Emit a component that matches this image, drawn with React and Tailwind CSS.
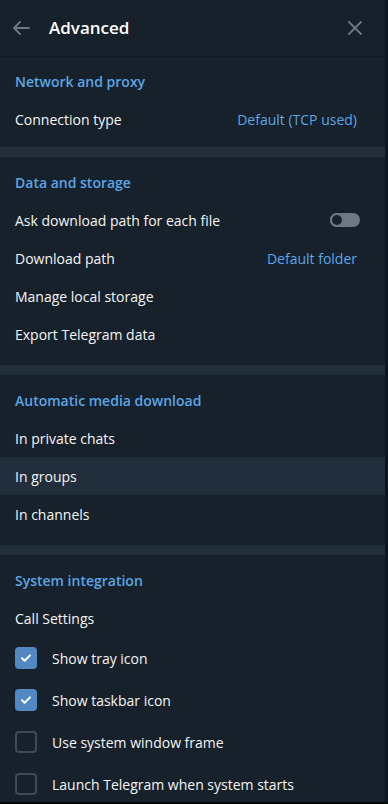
import { useState } from 'react'

function Toggle({ on }) {
  return (
    <div className="relative w-[30px] h-[14px] rounded-full bg-[#6c7883]">
      <div className={`absolute top-0 ${on ? 'right-0' : 'left-0'} w-[14px] h-[14px] rounded-full border-2 border-[#6c7883] bg-[#17212b]`} />
    </div>
  )
}

function Checkbox({ checked }) {
  if (checked) {
    return (
      <div className="w-[22px] h-[22px] rounded-[4px] bg-[#5288c1] flex items-center justify-center">
        <svg width="14" height="14" viewBox="0 0 14 14" fill="none">
          <path d="M3 7.2l2.6 2.6L11 4.4" stroke="#fff" strokeWidth="2" strokeLinecap="round" strokeLinejoin="round" />
        </svg>
      </div>
    )
  }
  return <div className="w-[22px] h-[22px] rounded-[4px] border-2 border-[#3d4957]" />
}

function Row({ label, value, right, active }) {
  return (
    <div className={`h-[38px] flex items-center justify-between pl-[15px] pr-[28px] ${active ? 'bg-[#232e3c]' : ''}`}>
      <span className="text-[#f5f5f5]">{label}</span>
      {value && <span className="text-[#5ba6e6]">{value}</span>}
      {right}
    </div>
  )
}

function SectionTitle({ children }) {
  return (
    <div className="h-[37px] flex items-center pl-[15px] font-semibold text-[#5ba6e6]">{children}</div>
  )
}

function Divider() {
  return <div className="h-[10px] bg-[#232e3c]" />
}

export default function App() {
  const [checks] = useState([
    { label: 'Show tray icon', checked: true },
    { label: 'Show taskbar icon', checked: true },
    { label: 'Use system window frame', checked: false },
    { label: 'Launch Telegram when system starts', checked: false },
  ])

  return (
    <div className="relative w-[388px] h-[804px] overflow-hidden bg-[#0e1621] text-[14px]" style={{ fontFamily: '"Open Sans", sans-serif' }}>
      <div className="w-[385px] h-[802px] bg-[#17212b] overflow-hidden">
        {/* header */}
        <div className="h-[57px] flex items-center border-b border-[#101921]">
          <svg className="ml-[12px]" width="18" height="18" viewBox="0 0 18 18" fill="none">
            <path d="M17 9H2M8 3L2 9l6 6" stroke="#6c7883" strokeWidth="1.8" strokeLinecap="round" strokeLinejoin="round" />
          </svg>
          <span className="ml-[19px] text-[17px] font-semibold text-white">Advanced</span>
          <svg className="ml-auto mr-[23px]" width="14" height="14" viewBox="0 0 14 14" fill="none">
            <path d="M1 1l12 12M13 1L1 13" stroke="#6c7883" strokeWidth="1.8" strokeLinecap="round" />
          </svg>
        </div>

        <div className="pt-[6px] pb-[9px]">
          <SectionTitle>Network and proxy</SectionTitle>
          <Row label="Connection type" value="Default (TCP used)" />
        </div>
        <Divider />

        <div className="pt-[7px] pb-[12px]">
          <SectionTitle>Data and storage</SectionTitle>
          <Row label="Ask download path for each file" right={<div className="mr-[-3px]"><Toggle on={false} /></div>} />
          <Row label="Download path" value="Default folder" />
          <Row label="Manage local storage" />
          <Row label="Export Telegram data" />
        </div>
        <Divider />

        <div className="pt-[7px] pb-[12px]">
          <SectionTitle>Automatic media download</SectionTitle>
          <Row label="In private chats" />
          <Row label="In groups" active />
          <Row label="In channels" />
        </div>
        <Divider />

        <div className="pt-[7px]">
          <SectionTitle>System integration</SectionTitle>
          <Row label="Call Settings" />
          {checks.map((c) => (
            <div key={c.label} className="h-[42px] flex items-center pl-[15px]">
              <Checkbox checked={c.checked} />
              <span className="ml-[15px] text-[#f5f5f5]">{c.label}</span>
            </div>
          ))}
        </div>
      </div>
      <div className="h-[2px] bg-[#050709]" />
    </div>
  )
}
